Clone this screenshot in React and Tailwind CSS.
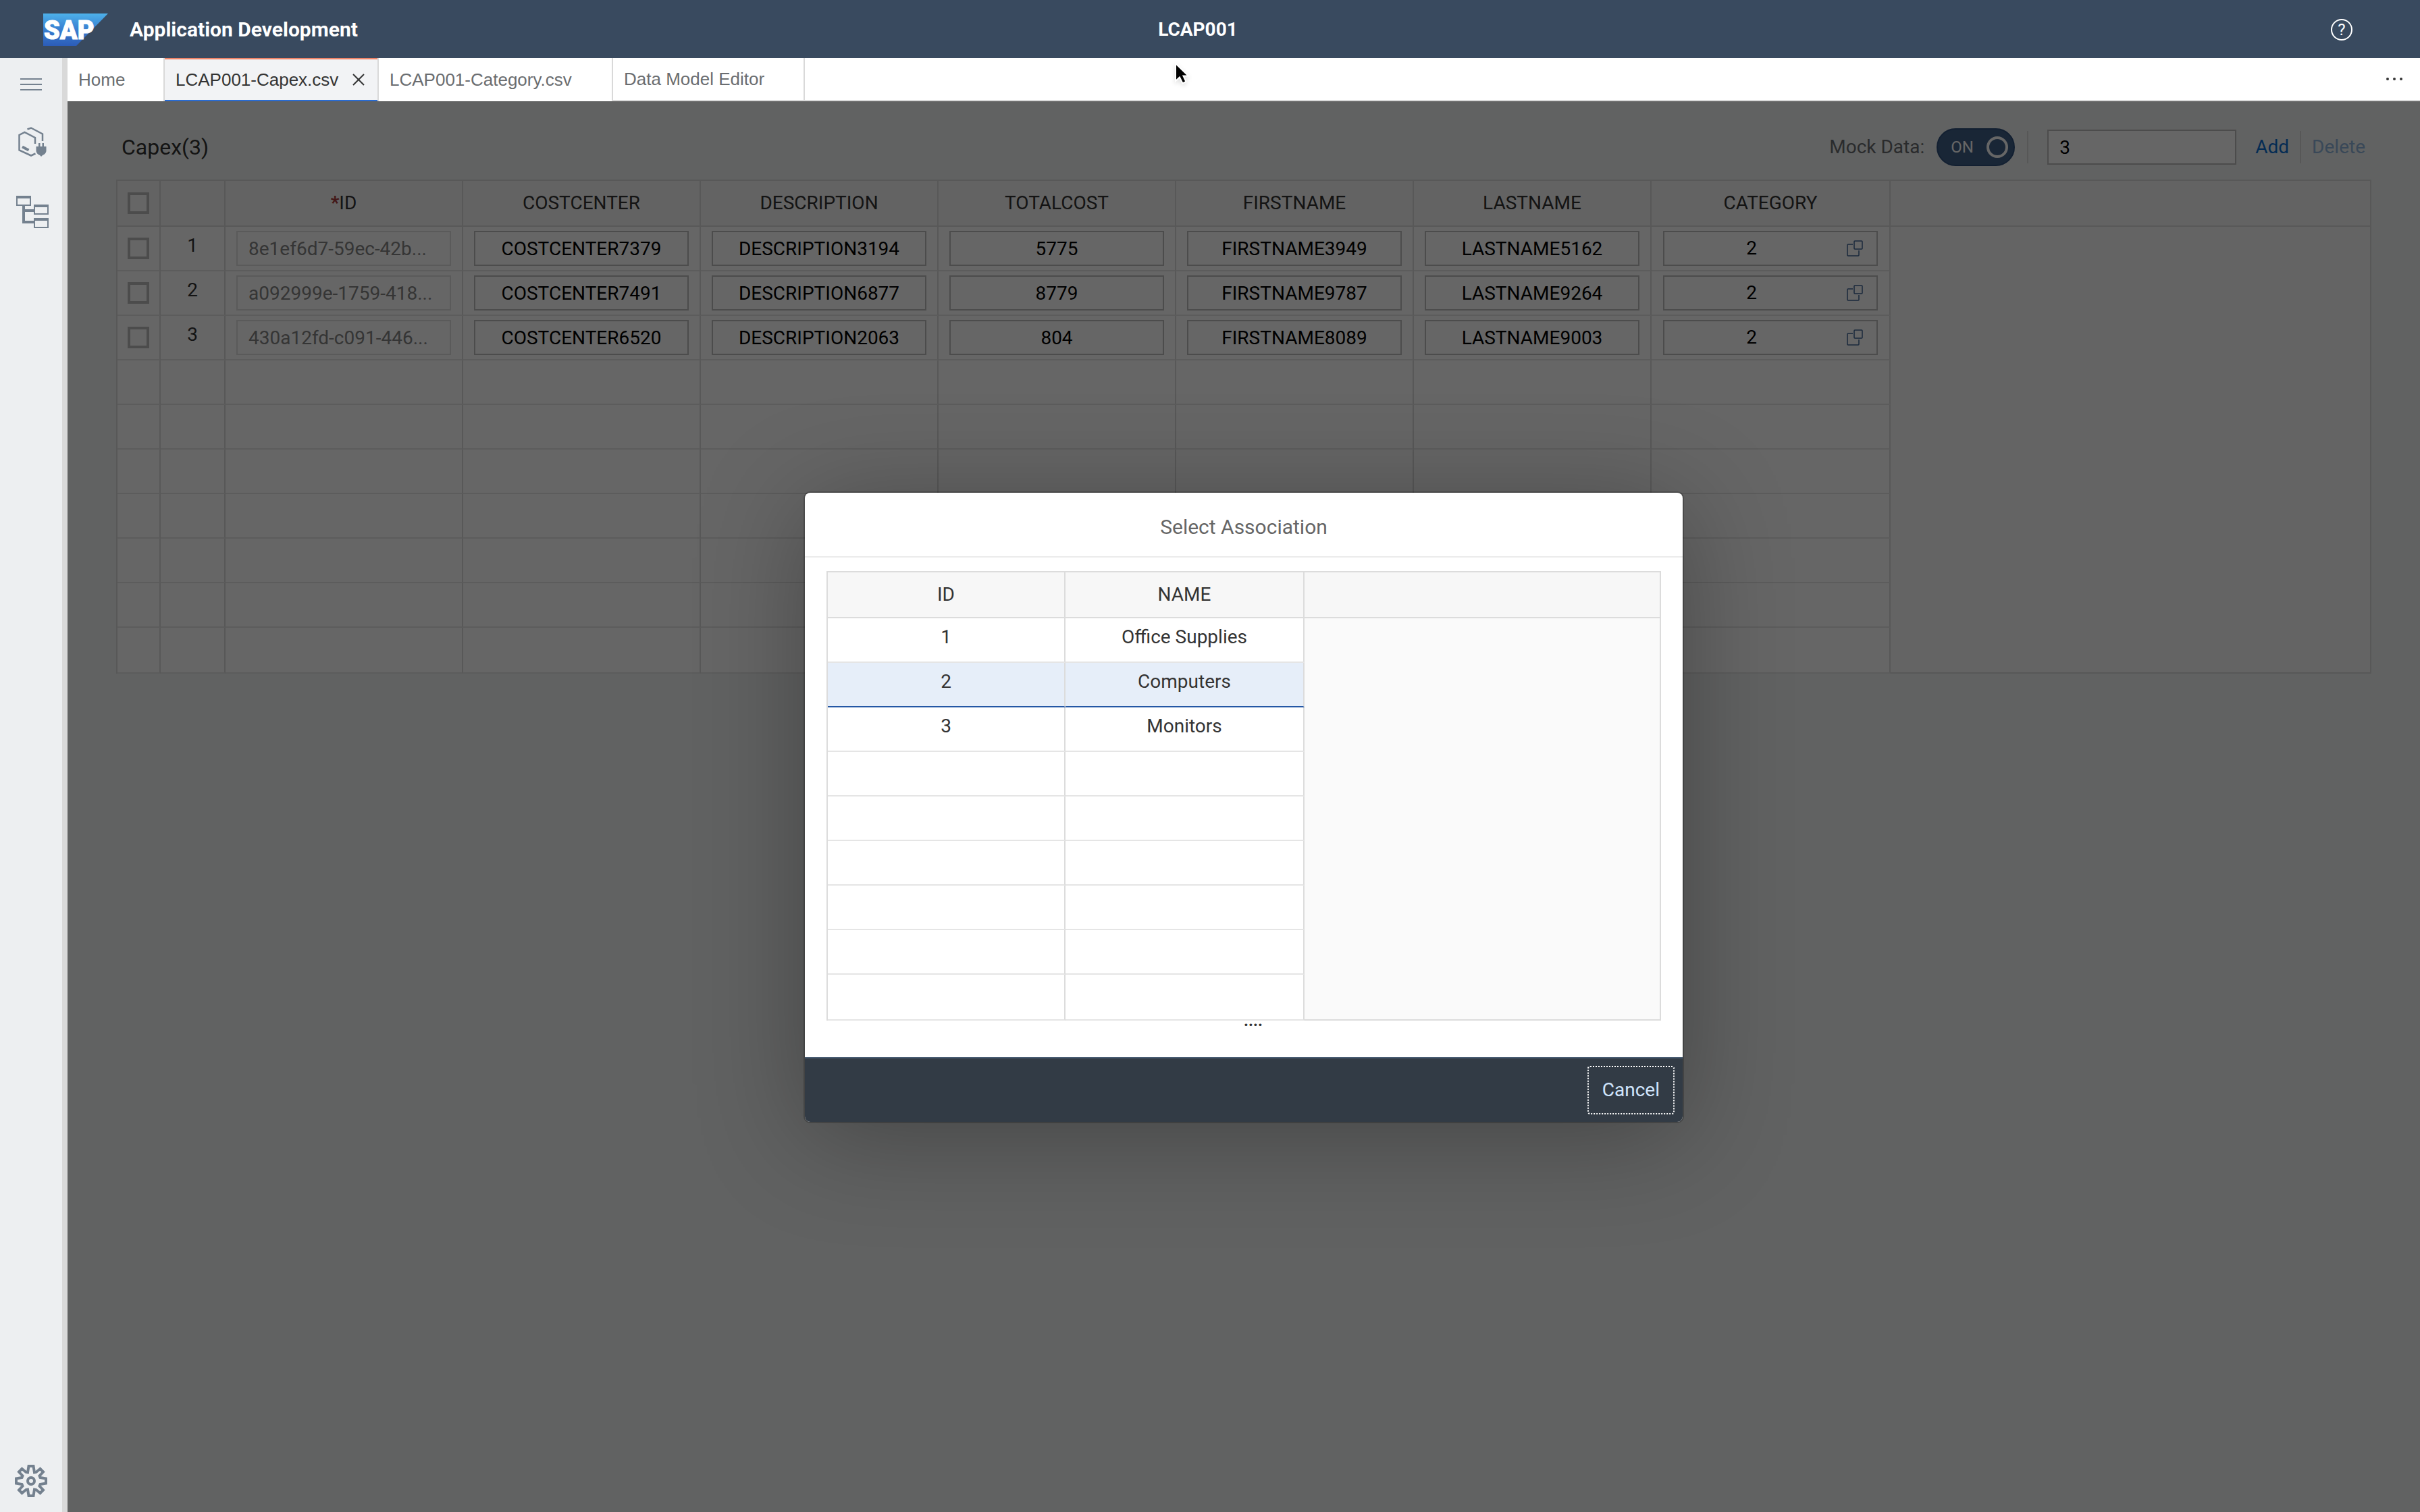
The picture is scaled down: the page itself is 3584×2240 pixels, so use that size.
import React from "react";

const FONT = "font-['Roboto','Noto_Sans',sans-serif]";

const COLUMNS = ["COSTCENTER", "DESCRIPTION", "TOTALCOST", "FIRSTNAME", "LASTNAME"];

const ROWS = [
  { id: "8e1ef6d7-59ec-42b...", values: ["COSTCENTER7379", "DESCRIPTION3194", "5775", "FIRSTNAME3949", "LASTNAME5162"], category: "2" },
  { id: "a092999e-1759-418...", values: ["COSTCENTER7491", "DESCRIPTION6877", "8779", "FIRSTNAME9787", "LASTNAME9264"], category: "2" },
  { id: "430a12fd-c091-446...", values: ["COSTCENTER6520", "DESCRIPTION2063", "804", "FIRSTNAME8089", "LASTNAME9003"], category: "2" },
];

const CATEGORIES = [
  ["1", "Office Supplies"],
  ["2", "Computers"],
  ["3", "Monitors"],
];

const HEAD = "h-[68px] border-r-2 border-b-2 border-r-[#dcdcdc] border-b-[#dcdcdc] bg-[#f7f7f7] p-0 text-center font-normal";
const CELL = "h-[66px] border-r-2 border-b-2 border-r-[#dcdcdc] border-b-[#e5e5e5] p-0 text-center";
const LAST_CELL = "h-[68px] border-r-2 border-b-2 border-r-[#dcdcdc] border-b-[#e5e5e5] p-0 text-center";

function SapLogo() {
  return (
    <svg className="h-12 w-24" viewBox="0 0 96 48" role="img" aria-label="SAP">
      <defs>
        <linearGradient id="sap" x1="0" y1="0" x2="0" y2="1">
          <stop offset="0" stopColor="#4db1ea" />
          <stop offset="0.45" stopColor="#3a83d3" />
          <stop offset="1" stopColor="#2c5cb8" />
        </linearGradient>
      </defs>
      <path d="M0 0H96L49 48H0Z" fill="url(#sap)" />
      <text x="1" y="38" fill="#fff" stroke="#fff" strokeWidth="1" fontFamily="Roboto, sans-serif" fontWeight="900" fontSize="38">
        SAP
      </text>
    </svg>
  );
}

function MenuIcon() {
  return (
    <svg className="h-5 w-8" viewBox="0 0 32 20" stroke="#74818f" strokeWidth="2">
      <path d="M0 2H32M0 10H32M0 18H32" />
    </svg>
  );
}

function ServiceIcon() {
  return (
    <svg className="h-11 w-[42px]" viewBox="0 0 42 44" fill="none" stroke="#74818f" strokeWidth="2.500">
      <path d="M13.500 3.500L19 1.500L36 10.500V21" />
      <path d="M25 25V16L9.500 8L1.500 12V34.500L19 42.500L25.500 39.500" />
      <path d="M6 29.500L15.500 34.500" strokeWidth="4" />
      <path d="M26.500 29H41.500V36Q40.500 40.500 36 42L34 44L32 42Q27.500 40.500 26.500 36ZM30 24H32.500V29H30ZM35.500 24H38V29H35.500Z" fill="#74818f" stroke="none" />
    </svg>
  );
}

function TreeIcon() {
  return (
    <svg className="h-12 w-12" viewBox="0 0 48 48" fill="none" stroke="#74818f">
      <path d="M1 1H21V14H1ZM27 14H47V27H27ZM27 34H47V47H27Z" strokeWidth="2" />
      <path d="M0 2H22M26 15H48M26 35H48" strokeWidth="4" />
      <path d="M11 15V39H26M11 22H26" strokeWidth="4" />
    </svg>
  );
}

function GearIcon() {
  return (
    <svg className="size-12" viewBox="0 0 48 48" fill="none" stroke="#74818f" strokeWidth="4">
      <path d="M20.500 2H27.500L29 11.500L31.500 11L37.500 6L42 10.500L36.500 16.500L37.500 19L46 20.500V27.500L37.500 29L36.500 31.500L42 37.500L37.500 42L31.500 37L29 36.500L27.500 46H20.500L19 36.500L16.500 37L10.500 42L6 37.500L11.500 31.500L10.500 29L2 27.500V20.500L10.500 19L11.500 16.500L6 10.500L10.500 6L16.500 11L19 11.500Z" />
      <circle cx="24" cy="24" r="5" />
    </svg>
  );
}

function ValueHelpIcon() {
  return (
    <svg className="size-6" viewBox="0 0 24 24" fill="none" stroke="#3f6594" strokeWidth="1.500">
      <rect x="11" y="1" width="12" height="12" rx="1" />
      <path d="M9 6H2Q1 6 1 7V22Q1 23 2 23H17Q18 23 18 22V15" />
    </svg>
  );
}

function Cursor() {
  return (
    <svg className="h-9 w-6 drop-shadow-md" viewBox="0 0 24 36">
      <path d="M1 2V28L7 22.500L11.500 31.500L16.500 29L12.500 20.500H20Z" fill="#000" stroke="#fff" strokeWidth="2" />
    </svg>
  );
}

function CheckBox({ label }) {
  return (
    <input
      type="checkbox"
      aria-label={label}
      className="mx-auto block size-8 appearance-none border-4 border-[#bfbfbf] bg-white"
    />
  );
}

function Field({ label, value, className, disabled }) {
  return (
    <input
      type="text"
      aria-label={label}
      defaultValue={value}
      disabled={disabled}
      className={`mx-auto block h-[52px] w-[318px] border-2 px-4 ${className}`}
    />
  );
}

function CapexTable() {
  return (
    <div className="flex border-t-2 border-l-2 border-[#dcdcdc] bg-white">
      <table className="w-[2626px] shrink-0 table-fixed border-separate border-spacing-0">
        <colgroup>
          <col className="w-16" />
          <col className="w-24" />
          {[0, 1, 2, 3, 4, 5].map((n) => (
            <col key={n} className="w-[352px]" />
          ))}
          <col className="w-[354px]" />
        </colgroup>
        <thead>
          <tr>
            <th className={HEAD}><CheckBox label="Select all rows" /></th>
            <th className={HEAD} />
            <th className={HEAD}><b className="text-[#a83c3c]">*</b>ID</th>
            {COLUMNS.map((c) => (
              <th key={c} className={HEAD}>{c}</th>
            ))}
            <th className={HEAD}>CATEGORY</th>
          </tr>
        </thead>
        <tbody>
          {ROWS.map((row, i) => (
            <tr key={row.id}>
              <td className={CELL}><CheckBox label={`Select row ${i + 1}`} /></td>
              <td className={`${CELL} pb-2`}>{i + 1}</td>
              <td className={CELL}>
                <Field label="ID" value={row.id} disabled className="border-[#e0e0e0] bg-white text-[#858585]" />
              </td>
              {row.values.map((v, k) => (
                <td key={v} className={CELL}>
                  <Field label={COLUMNS[k]} value={v} className="border-[#bfbfbf] bg-white text-center text-black" />
                </td>
              ))}
              <td className={CELL}>
                <div className="mx-auto flex h-[52px] w-[318px] items-center border-2 border-[#bfbfbf] bg-white pr-5">
                  <input type="text" aria-label="CATEGORY" defaultValue={row.category} className="min-w-0 flex-1 text-center text-black" />
                  <button type="button" aria-label="Open value help" className="pl-3"><ValueHelpIcon /></button>
                </div>
              </td>
            </tr>
          ))}
          {[4, 5, 6, 7, 8, 9, 10].map((n) => (
            <tr key={n}>
              {[0, 1, 2, 3, 4, 5, 6, 7, 8].map((k) => (
                <td key={k} className={n === 10 ? LAST_CELL : CELL} />
              ))}
            </tr>
          ))}
        </tbody>
      </table>
      <div className="flex flex-1 flex-col border-r-2 border-b-2 border-[#dcdcdc]">
        <div className="h-[68px] border-b-2 border-[#dcdcdc] bg-[#f7f7f7]" />
        <div className="flex-1 bg-[#fafafa]" />
      </div>
    </div>
  );
}

function AssociationDialog() {
  return (
    <div
      role="dialog"
      aria-modal="true"
      aria-labelledby="dialog-title"
      className="w-[1300px] overflow-hidden rounded-lg bg-white shadow-[0_0_0_2px_rgba(0,0,0,0.2),0_20px_160px_0_rgba(0,0,0,0.3)]"
    >
      <h2 id="dialog-title" className="flex h-24 items-center justify-center border-b-2 border-[#ebebeb] pt-2 text-[30px] text-[#666]">
        Select Association
      </h2>
      <div className="px-8 pt-5 pb-[46px]">
        <div className="flex border-t-2 border-l-2 border-[#dcdcdc] text-[#333]">
          <table className="w-[706px] shrink-0 table-fixed border-separate border-spacing-0">
            <colgroup>
              <col className="w-[352px]" />
              <col className="w-[354px]" />
            </colgroup>
            <thead>
              <tr>
                <th className={HEAD}>ID</th>
                <th className={HEAD}>NAME</th>
              </tr>
            </thead>
            <tbody>
              {CATEGORIES.map(([id, name]) => {
                const selected = id === "2";
                const tone = selected
                  ? "h-[66px] border-r-2 border-b-2 border-r-[#dcdcdc] border-b-[#2457a5] bg-[#e6eef9] p-0 pb-2 text-center"
                  : `${CELL} pb-2`;
                return (
                  <tr key={id} aria-selected={selected}>
                    <td className={tone}>{id}</td>
                    <td className={tone}>{name}</td>
                  </tr>
                );
              })}
              {[4, 5, 6, 7, 8, 9].map((n) => (
                <tr key={n}>
                  <td className={n === 9 ? LAST_CELL : CELL} />
                  <td className={n === 9 ? LAST_CELL : CELL} />
                </tr>
              ))}
            </tbody>
          </table>
          <div className="flex flex-1 flex-col border-r-2 border-b-2 border-[#dcdcdc]">
            <div className="h-[68px] border-b-2 border-[#dcdcdc] bg-[#f7f7f7]" />
            <div className="flex-1 bg-[#fafafa]" />
          </div>
        </div>
        <div className="h-2 pl-[50%] text-2xl leading-[0px] font-bold text-[#333]">....</div>
      </div>
      <footer className="flex h-24 items-center justify-end border-t-2 border-[#485c72] bg-[#323b45] px-3">
        <button type="button" className="h-[72px] rounded-sm border-2 border-dotted border-white px-5 text-[#d0e4fb]">
          Cancel
        </button>
      </footer>
    </div>
  );
}

export default function App() {
  return (
    <div className={`flex h-screen flex-col text-[28px] leading-8 text-[#333] ${FONT}`}>
      <header className="grid h-[86px] shrink-0 grid-cols-[1fr_auto_1fr] items-center bg-[#394a5f] pt-0.5 pr-[100px] pl-16 font-bold text-white">
        <div className="flex items-center gap-8">
          <SapLogo />
          <span className="text-[30px]">Application Development</span>
        </div>
        <h1>LCAP001</h1>
        <button type="button" aria-label="Help" className="flex size-8 items-center justify-center justify-self-end rounded-full border-2 border-white text-2xl font-normal">
          ?
        </button>
      </header>

      <div className="flex min-h-0 flex-1">
        <nav className="flex w-[100px] shrink-0 flex-col items-center border-r-8 border-[#d9d9d9] bg-[#edeff1] pt-[29px] pb-[22px]">
          <button type="button" aria-label="Menu"><MenuIcon /></button>
          <button type="button" aria-label="Services" className="mt-[53px] pl-1"><ServiceIcon /></button>
          <button type="button" aria-label="Structure" className="mt-[58px] pl-1"><TreeIcon /></button>
          <button type="button" aria-label="Settings" className="mt-auto"><GearIcon /></button>
        </nav>

        <div className="flex min-w-0 flex-1 flex-col">
          <div className="relative flex h-16 shrink-0 bg-white font-['Liberation_Sans',sans-serif] text-[26px] text-[#6a6d70]">
            <button type="button" className="w-[142px] pl-4 text-left">Home</button>
            <div className="flex w-[319px] items-center border-x-2 border-[#d9d9d9]">
              <div className="flex h-full flex-1 items-center justify-between border-t-2 border-b-2 border-t-[#ee8468] border-b-[#2a6bd0] bg-[#f2f3f5] pr-4 pl-4 text-[#333]">
                <button type="button">LCAP001-Capex.csv</button>
                <button type="button" aria-label="Close tab">
                  <svg className="size-[22px]" viewBox="0 0 22 22" stroke="#333" strokeWidth="2">
                    <path d="M2 3L18 19M18 3L2 19" />
                  </svg>
                </button>
              </div>
            </div>
            <button type="button" className="w-[345px] pl-4 text-left">LCAP001-Category.csv</button>
            <button type="button" className="w-[286px] border-x-2 border-b-2 border-[#d9d9d9] pl-4 text-left">Data Model Editor</button>
            <div className="flex flex-1 items-center justify-end border-b-2 border-[#d9d9d9] pr-[26px]">
              <button type="button" aria-label="More tabs">
                <svg className="h-1 w-6" viewBox="0 0 24 4" fill="#333">
                  <circle cx="2" cy="2" r="2" />
                  <circle cx="12" cy="2" r="2" />
                  <circle cx="22" cy="2" r="2" />
                </svg>
              </button>
            </div>
            <div className="absolute top-1.5 left-[1640px]"><Cursor /></div>
          </div>

          <main className="relative flex-1 bg-[#f2f6f4] pt-5 pr-18 pl-18">
            <div className="flex h-24 items-center pl-2">
              <h2 className="flex-1 text-[32px]">Capex(3)</h2>
              <span className="mr-[18px] text-[#6a6d70]">Mock Data:</span>
              <button type="button" role="switch" aria-checked="true" aria-label="Mock Data" className="flex h-14 w-[116px] items-center justify-between rounded-full border-2 border-[#2f4f7a] bg-[#3f6088] pr-2 pl-[19px] text-2xl text-white">
                ON
                <span className="size-8 rounded-full border-4 border-white" />
              </button>
              <span className="mr-7 ml-[18px] h-12 w-0.5 bg-[#d9d9d9]" />
              <input type="text" aria-label="Number of rows" defaultValue="3" className="h-[52px] w-[280px] border-2 border-[#bfbfbf] bg-white px-4 text-black" />
              <button type="button" className="ml-7 text-[#0a6ed1]">Add</button>
              <span className="mx-4 h-12 w-0.5 bg-[#d9d9d9]" />
              <button type="button" disabled className="mr-[9px] text-[#8fb4dd]">Delete</button>
            </div>
            <CapexTable />
            <div className="absolute inset-0 flex items-center justify-center bg-black/60 pt-0.5">
              <AssociationDialog />
            </div>
          </main>
        </div>
      </div>
    </div>
  );
}
